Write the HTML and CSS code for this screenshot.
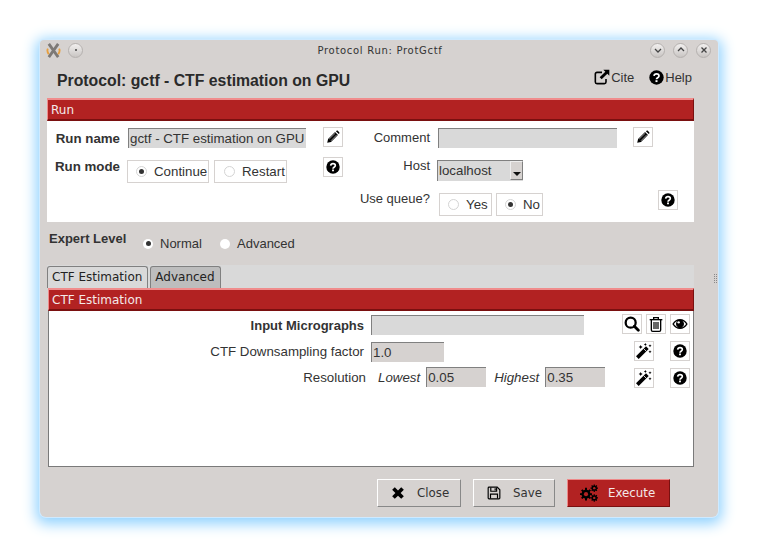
FILE: index.html
```html
<!DOCTYPE html>
<html lang="en">
<head>
    <meta charset="UTF-8">
    <title>Protocol Run: ProtGctf</title>
    <link rel="stylesheet" href="styles.css">
</head>
<body>
    <svg class="defs" width="0" height="0">
        <symbol id="i-pencil" viewBox="0 0 24 24"><path d="M2 22l1.600-6.600L15.500 3.500l5 5L8.600 20.400z"/><path d="M17 2l1.200-.8c.8-.5 1.500-.4 2.100.2l2.300 2.300c.6.600.7 1.400.2 2.100L22 7z"/><path d="M5.500 15.500L15.800 5.500M8.500 18.500L18.500 8.300" stroke="#fff" stroke-width="1"/></symbol>
        <symbol id="i-help" viewBox="0 0 24 24"><circle cx="12" cy="12" r="11.500"/><path d="M8 9.500c.3-2.200 1.800-3.300 4-3.300s4 1.300 4 3.300c0 2.900-4 2.900-4 5.300" fill="none" stroke="#fff" stroke-width="2.800"/><rect x="10.400" y="16.300" width="3.200" height="3" fill="#fff"/></symbol>
        <symbol id="i-link" viewBox="0 0 24 24"><path d="M12 5H4.500A2.500 2.500 0 0 0 2 7.500v12A2.500 2.500 0 0 0 4.500 22h11a2.500 2.500 0 0 0 2.500-2.500V15" fill="none" stroke="#000" stroke-width="2.400"/><path d="M14 1h9v9l-3-3-8.500 8.500-3-3L17 4z"/></symbol>
        <symbol id="i-search" viewBox="0 0 24 24"><circle cx="10" cy="10" r="7.500" fill="none" stroke="#000" stroke-width="3.400"/><path d="M15.500 15.500l6 6" stroke="#000" stroke-width="4.200" stroke-linecap="round"/></symbol>
        <symbol id="i-trash" viewBox="0 0 24 24"><path d="M2.500 5.500h19" stroke="#000" stroke-width="2"/><path d="M8.500 5V2.500h7V5" fill="none" stroke="#000" stroke-width="2"/><path d="M5 6v15a2 2 0 0 0 2 2h10a2 2 0 0 0 2-2V6" fill="none" stroke="#000" stroke-width="2"/><path d="M9 9v10.500M12 9v10.500M15 9v10.500" stroke="#000" stroke-width="1.800"/></symbol>
        <symbol id="i-eye" viewBox="0 0 24 24"><path d="M.5 12C3.500 7 7.500 4.500 12 4.500S20.500 7 23.500 12c-3 5-7 7.500-11.500 7.500S3.500 17 .5 12z"/><path d="M2.800 12c1.600-2.300 3.500-4 5.600-5a6 6 0 1 0 7.200 0c2.100 1 4 2.700 5.600 5-2.500 3.600-5.700 5.500-9.200 5.500S5.300 15.600 2.800 12z" fill="#fff"/><circle cx="10" cy="9.500" r="1.800" fill="#fff"/></symbol>
        <symbol id="i-magic" viewBox="0 0 24 24"><path d="M0 20L15 5l4 4L4 24z"/><path d="M11.500 8.500l4 4" stroke="#fff" stroke-width="1.200"/><path d="M7 3l1 2 2 1-2 1-1 2-1-2-2-1 2-1zM14 0l.8 1.500 1.500.8-1.500.7-.8 1.500-.8-1.500-1.500-.7 1.500-.8zM21 2l.8 1.500 1.500.8-1.500.7-.8 1.500-.8-1.500-1.500-.7 1.500-.8zM21 11l.8 1.500 1.500.8-1.500.7-.8 1.500-.8-1.500-1.500-.7 1.500-.8z"/></symbol>
        <symbol id="i-close" viewBox="0 0 24 24"><path d="M2 6.500L6.500 2 12 7.500 17.500 2 22 6.500 16.500 12l5.500 5.500-4.500 4.500-5.500-5.500L6.500 22 2 17.500 7.500 12z"/></symbol>
        <symbol id="i-save" viewBox="0 0 24 24"><path d="M3.500 2h14L22 6.500v14a1.500 1.500 0 0 1-1.500 1.500h-17A1.500 1.500 0 0 1 2 20.500v-17A1.500 1.500 0 0 1 3.500 2z" fill="none" stroke="#000" stroke-width="2"/><path d="M6.500 2.500v6.500h10V2.500" fill="none" stroke="#000" stroke-width="2"/><path d="M13 4h2v3.500h-2z"/><path d="M6 21.500V14h12v7.500" fill="none" stroke="#000" stroke-width="2"/></symbol>
        <symbol id="i-cogs" viewBox="0 0 24 24"><path d="M8 5v17M0 13.500h16M2.300 7.800l11.400 11.400M13.700 7.800L2.300 19.200" stroke="#000" stroke-width="2.600"/><circle cx="8" cy="13.500" r="6"/><circle cx="8" cy="13.500" r="2.800" fill="#b22222"/><path d="M19 .5v10M14 5.500h10M15.500 2l7 7M22.500 2l-7 7" stroke="#000" stroke-width="1.600"/><circle cx="19" cy="5.500" r="3.500"/><circle cx="19" cy="5.500" r="1.600" fill="#b22222"/><path d="M19 13.500v10M14 18.500h10M15.500 15l7 7M22.500 15l-7 7" stroke="#000" stroke-width="1.600"/><circle cx="19" cy="18.500" r="3.500"/><circle cx="19" cy="18.500" r="1.600" fill="#b22222"/></symbol>
    </svg>

    <div class="window">
        <div class="titlebar">
            <div class="title-left">
                <svg class="app-icon" viewBox="0 0 16 16"><path d="M3 1l10 14M13 1L3 15" stroke="#7d7976" stroke-width="3"/><path d="M2 6c-1 2-.5 4 1 6M14 6c1 2 .5 4-1 6" fill="none" stroke="#e8a040" stroke-width="2"/></svg>
                <span class="wm-btn"><span class="wm-dot"></span></span>
            </div>
            <div class="title-text">Protocol Run: ProtGctf</div>
            <div class="title-right">
                <span class="wm-btn"><svg viewBox="0 0 10 10"><path d="M2 4l3 3 3-3" fill="none" stroke="#444" stroke-width="1.300"/></svg></span>
                <span class="wm-btn"><svg viewBox="0 0 10 10"><path d="M2 6l3-3 3 3" fill="none" stroke="#444" stroke-width="1.300"/></svg></span>
                <span class="wm-btn"><svg viewBox="0 0 10 10"><path d="M2.500 2.500l5 5M7.500 2.500l-5 5" fill="none" stroke="#444" stroke-width="1.300"/></svg></span>
            </div>
        </div>

        <div class="heading">
            <h1>Protocol: gctf - CTF estimation on GPU</h1>
            <div class="heading-links">
                <span class="link"><svg class="icon-link"><use href="#i-link"/></svg>Cite</span>
                <span class="link"><svg class="icon-help"><use href="#i-help"/></svg>Help</span>
            </div>
        </div>

        <section class="run-panel">
            <div class="bar">Run</div>
            <div class="run-body">
                <div class="run-row row-name">
                    <label class="lbl bold">Run name</label>
                    <div class="field field-name">gctf - CTF estimation on GPU</div>
                    <button class="icon-btn btn-a"><svg><use href="#i-pencil"/></svg></button>
                    <label class="lbl lbl-right">Comment</label>
                    <div class="field field-comment"></div>
                    <button class="icon-btn btn-b"><svg><use href="#i-pencil"/></svg></button>
                </div>
                <div class="run-row row-mode">
                    <label class="lbl bold">Run mode</label>
                    <div class="radio-box box-continue"><span class="radio on"></span>Continue</div>
                    <div class="radio-box box-restart"><span class="radio"></span>Restart</div>
                    <button class="icon-btn btn-c"><svg><use href="#i-help"/></svg></button>
                    <label class="lbl lbl-host">Host</label>
                    <div class="select">localhost<span class="select-arrow"></span></div>
                </div>
                <div class="run-row row-queue">
                    <label class="lbl lbl-queue">Use queue?</label>
                    <div class="radio-box box-yes"><span class="radio"></span>Yes</div>
                    <div class="radio-box box-no"><span class="radio on"></span>No</div>
                    <button class="icon-btn btn-d"><svg><use href="#i-help"/></svg></button>
                </div>
            </div>
        </section>

        <div class="expert">
            <label class="bold">Expert Level</label>
            <span class="expert-opt opt-normal"><span class="radio on"></span>Normal</span>
            <span class="expert-opt opt-advanced"><span class="radio"></span>Advanced</span>
        </div>

        <div class="tabs">
            <div class="tab active">CTF Estimation</div>
            <div class="tab">Advanced</div>
        </div>
        <section class="tab-panel">
            <div class="bar">CTF Estimation</div>
            <div class="param-box">
                <div class="param row-mics">
                    <label class="param-label bold">Input Micrographs</label>
                    <div class="field field-mics"></div>
                    <div class="param-btns">
                        <button class="icon-btn"><svg class="big"><use href="#i-search"/></svg></button>
                        <button class="icon-btn"><svg class="big"><use href="#i-trash"/></svg></button>
                        <button class="icon-btn"><svg class="big"><use href="#i-eye"/></svg></button>
                    </div>
                </div>
                <div class="param row-down">
                    <label class="param-label">CTF Downsampling factor</label>
                    <div class="field value field-down">1.0</div>
                    <div class="param-btns">
                        <button class="icon-btn"><svg class="big"><use href="#i-magic"/></svg></button>
                        <button class="icon-btn gap-left"><svg><use href="#i-help"/></svg></button>
                    </div>
                </div>
                <div class="param row-res">
                    <label class="param-label">Resolution</label>
                    <em class="sub sub-low">Lowest</em>
                    <div class="field value field-res">0.05</div>
                    <em class="sub sub-high">Highest</em>
                    <div class="field value field-res">0.35</div>
                    <div class="param-btns">
                        <button class="icon-btn"><svg class="big"><use href="#i-magic"/></svg></button>
                        <button class="icon-btn gap-left"><svg><use href="#i-help"/></svg></button>
                    </div>
                </div>
            </div>
        </section>

        <div class="footer">
            <button class="action btn-close"><svg><use href="#i-close"/></svg>Close</button>
            <button class="action btn-save"><svg><use href="#i-save"/></svg>Save</button>
            <button class="action btn-execute"><svg><use href="#i-cogs"/></svg>Execute</button>
        </div>
        <div class="grip"></div>
    </div>
</body>
</html>
```

FILE: styles.css
```css
* {
    box-sizing: border-box;
}
body {
    margin: 0;
    padding: 40px;
    background-color: #fff;
    font-family: "Liberation Sans", Arial, sans-serif;
    font-size: 13px;
    color: #222;
    overflow: hidden;
}
.defs {
    position: absolute;
}
.bold {
    font-weight: bold;
}
.window {
    position: relative;
    display: flex;
    flex-direction: column;
    width: 678px;
    height: 477px;
    padding-left: 7px;
    background-color: #d6d2d0;
    border-radius: 4px 4px 6px 6px;
    box-shadow: 0 0 0 1px #cfeaff, 0 3px 14px 4px #90d2ff;
}
.titlebar {
    position: relative;
    display: flex;
    justify-content: space-between;
    align-items: center;
    height: 20px;
    margin-left: -7px;
    padding: 0 7px 0 6px;
}
.title-left, .title-right {
    display: flex;
    align-items: center;
}
.title-left {
    gap: 7px;
}
.title-right {
    gap: 8px;
}
.title-text {
    position: absolute;
    left: 2px;
    right: 0;
    text-align: center;
    font-family: "DejaVu Sans", sans-serif;
    font-size: 10px;
    letter-spacing: 0.7px;
    color: #333;
}
.app-icon {
    width: 15px;
    height: 15px;
}
.wm-btn {
    display: flex;
    align-items: center;
    justify-content: center;
    width: 15px;
    height: 15px;
    border: 1px solid #b5b1af;
    border-radius: 50%;
    background: linear-gradient(#f2f0ef, #c9c5c3);
}
.wm-btn svg {
    width: 10px;
    height: 10px;
}
.wm-dot {
    width: 2px;
    height: 2px;
    background-color: #444;
    border-radius: 50%;
}
.heading {
    display: flex;
    justify-content: space-between;
    height: 38px;
    padding: 0 26px 0 10px;
}
h1 {
    margin: 0;
    padding-top: 12px;
    font-size: 15.800px;
    color: #2a2a2a;
}
.heading-links {
    display: flex;
    gap: 15px;
    padding-top: 8px;
    color: #333;
}
.link {
    display: flex;
    align-items: center;
    height: 18px;
}
.icon-link {
    width: 16px;
    height: 16px;
    margin-right: 1px;
}
.icon-help {
    width: 15px;
    height: 15px;
    margin-right: 1px;
}
.bar {
    height: 23px;
    padding-left: 3px;
    background-color: #b22222;
    border-top: 2px solid #f08c8c;
    border-left: 1px solid #f08c8c;
    border-right: 1px solid #7a1010;
    border-bottom: 2px solid #7a1010;
    font-family: "DejaVu Sans", sans-serif;
    font-size: 12px;
    line-height: 20px;
    color: #f4e9e9;
}
.run-panel {
    width: 647px;
}
.run-body {
    height: 101px;
    padding-top: 6px;
    background-color: #fff;
}
.run-row {
    display: flex;
}
.lbl {
    flex: none;
    width: 73px;
    text-align: right;
    color: #333;
}
.lbl.bold {
    font-size: 13.300px;
}
.lbl-right {
    width: 87px;
}
.row-name {
    height: 30px;
}
.row-name .lbl {
    line-height: 23px;
}
.row-name .lbl-right {
    line-height: 21px;
}
.field {
    flex: none;
    height: 20px;
    padding-left: 1px;
    background-color: #d9d9d9;
    border-top: 1px solid #808080;
    border-left: 1px solid #808080;
    font-size: 13.300px;
    line-height: 19px;
    color: #333;
}
.field-name {
    width: 178px;
    margin: 1px 0 0 8px;
    white-space: nowrap;
}
.field-comment {
    width: 179px;
    margin: 1px 0 0 8px;
}
.icon-btn {
    flex: none;
    display: flex;
    align-items: center;
    justify-content: center;
    width: 20px;
    height: 20px;
    padding: 0;
    background-color: #fff;
    border: 1px solid #d6d2d0;
}
.icon-btn svg {
    width: 14px;
    height: 14px;
}
.icon-btn svg.big {
    width: 16px;
    height: 16px;
}
.btn-a {
    margin-left: 17px;
}
.btn-b {
    margin-left: 16px;
}
.row-mode {
    height: 33px;
}
.row-mode .lbl {
    line-height: 20px;
}
.radio-box {
    flex: none;
    display: flex;
    align-items: center;
    height: 23px;
    margin-top: 3px;
    background-color: #fff;
    border: 1px solid #d6d2d0;
    font-size: 13.300px;
    color: #333;
}
.radio {
    position: relative;
    flex: none;
    width: 11px;
    height: 11px;
    margin: 0 7px 0 8px;
    border-radius: 50%;
    background-color: #fff;
    border: 1px solid #d4d4d4;
}
.radio.on::after {
    content: "";
    position: absolute;
    left: 2px;
    top: 2px;
    width: 5px;
    height: 5px;
    border-radius: 50%;
    background-color: #333;
}
.box-continue {
    width: 82px;
    margin-left: 7px;
}
.box-restart {
    width: 73px;
    margin-left: 5px;
}
.box-restart .radio {
    margin-left: 9px;
}
.btn-c {
    margin-left: 36px;
}
.row-mode .lbl-host {
    width: 87px;
    line-height: 18px;
}
.select {
    position: relative;
    flex: none;
    width: 86px;
    height: 21px;
    margin: 3px 0 0 7px;
    padding-left: 1px;
    background-color: #d9d9d9;
    border-top: 1px solid #808080;
    border-left: 1px solid #808080;
    font-size: 13.300px;
    line-height: 20px;
    color: #333;
}
.select-arrow {
    position: absolute;
    right: 0;
    top: 0;
    width: 13px;
    height: 19px;
    border: 1px solid #808080;
    border-top-color: #eee;
    border-left-color: #eee;
    background-color: #d6d2d0;
}
.select-arrow::after {
    content: "";
    position: absolute;
    left: 2px;
    bottom: 3px;
    border: 4px solid transparent;
    border-top-color: #111;
    border-bottom: 0;
}
.row-queue {
    height: 26px;
}
.lbl-queue {
    width: 383px;
    line-height: 17px;
}
.box-yes {
    width: 53px;
    margin-left: 9px;
}
.box-no {
    width: 47px;
    margin-left: 4px;
}
.btn-d {
    margin-left: 115px;
}
.expert {
    display: flex;
    height: 43px;
    padding: 9px 0 0 2px;
    color: #333;
}
.expert label {
    width: 94px;
}
.expert-opt {
    display: flex;
    align-items: center;
    height: 15px;
    margin-top: 5px;
}
.expert-opt .radio {
    width: 10px;
    height: 10px;
    margin: 0 7px 0 0;
    border: 0;
}
.expert-opt .radio.on::after {
    left: 2.500px;
    top: 2.500px;
}
.opt-normal {
    width: 76px;
}
.opt-advanced .radio {
    margin: 0 7px 0 1px;
}
.tabs {
    display: flex;
    gap: 2px;
    width: 647px;
    height: 23px;
    padding-top: 1px;
    background-color: #d9d9d9;
}
.tab {
    height: 22px;
    padding: 0 5px 0 4px;
    background-color: #bdbdbd;
    border: 1px solid #808080;
    border-bottom: 0;
    border-radius: 3px 3px 0 0;
    font-family: "DejaVu Sans", sans-serif;
    font-size: 12px;
    line-height: 21px;
    color: #222;
}
.tab.active {
    background-color: #d9d9d9;
}
.tab-panel {
    width: 646px;
    height: 179px;
    margin-left: 1px;
    display: flex;
    flex-direction: column;
}
.param-box {
    flex: 1;
    padding-top: 3px;
    background-color: #fff;
    border: 1px solid #7a7a7a;
    border-top: 0;
    font-size: 13.300px;
}
.param {
    display: flex;
    align-items: center;
    height: 20px;
}
.row-mics .field, .row-down .field {
    margin-top: 2px;
}
.row-mics .param-label {
    margin-top: 2px;
    font-size: 13px;
}
.row-res .param-label, .row-res .sub, .row-res .field {
    margin-bottom: 2px;
}
.row-down {
    margin-top: 7px;
}
.row-res {
    margin-top: 7px;
}
.param-label {
    width: 315px;
    text-align: right;
    color: #333;
}
.row-res .param-label {
    width: 317px;
}
.field-mics {
    width: 213px;
    margin-left: 7px;
}
.value {
    background-color: #d6d2d0;
}
.field-down {
    width: 73px;
    margin-left: 7px;
}
.sub {
    color: #333;
}
.sub-low {
    margin-left: 12px;
}
.sub-high {
    margin-left: 8px;
}
.field-res {
    width: 60px;
    margin-left: 6px;
}
.param-btns {
    display: flex;
    gap: 4px;
    margin-left: auto;
    margin-right: 3px;
}
.gap-left {
    margin-left: 12px;
}
.footer {
    display: flex;
    height: 50px;
    padding: 12px 0 0 330px;
}
.action {
    display: flex;
    align-items: center;
    height: 28px;
    padding: 0;
    background-color: #d6d2d0;
    border: 1px solid #888;
    border-top-color: #fff;
    border-left-color: #fff;
    font-family: "DejaVu Sans", sans-serif;
    font-size: 11.800px;
    color: #333;
}
.action svg {
    flex: none;
    width: 14px;
    height: 14px;
}
.btn-close {
    width: 84px;
}
.btn-close svg {
    margin: 0 12px 0 13px;
}
.btn-save {
    width: 82px;
    margin-left: 12px;
}
.btn-save svg {
    margin: 0 12px 0 13px;
}
.btn-execute {
    width: 103px;
    margin-left: 12px;
    background-color: #b22222;
    border-color: #7a1010;
    border-top-color: #e88;
    border-left-color: #e88;
    color: #f4e9e9;
}
.btn-execute svg {
    width: 18px;
    height: 18px;
    margin: 0 10px 0 12px;
}
.grip {
    position: absolute;
    right: 1px;
    top: 234px;
    width: 3px;
    height: 9px;
    border-left: 1px dotted #888;
    border-right: 1px dotted #888;
}
```
